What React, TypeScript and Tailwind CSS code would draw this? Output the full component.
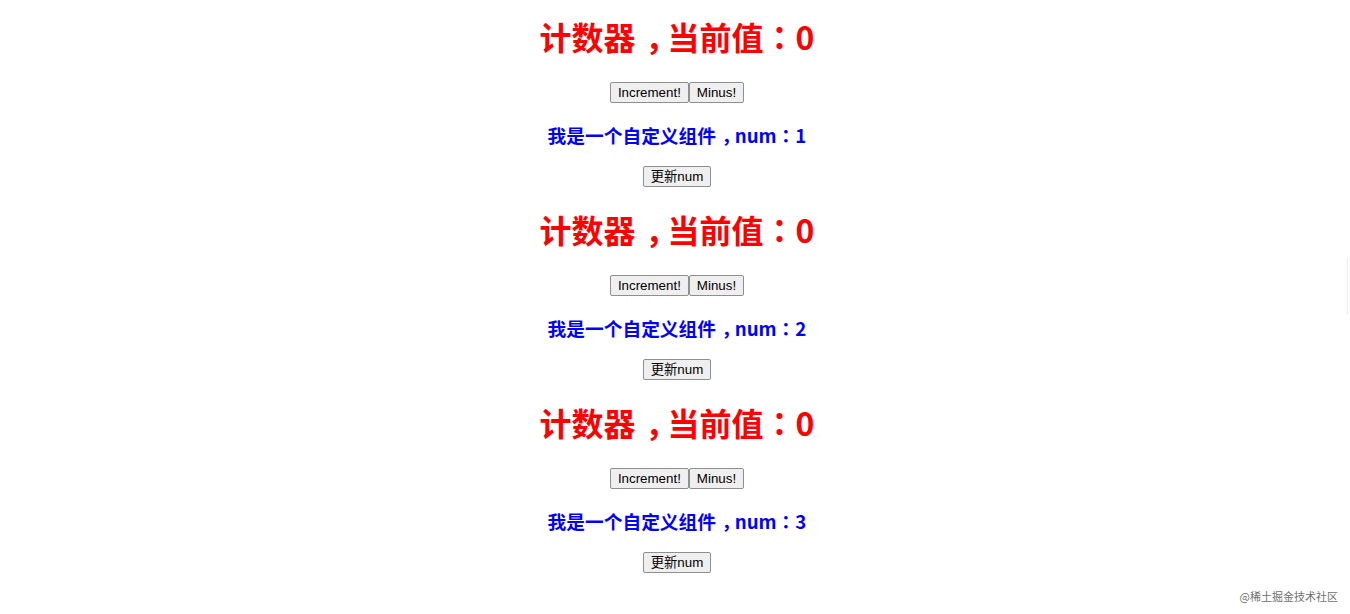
import { useState } from 'react';

function Btn({ children, onClick }: { children: React.ReactNode; onClick?: () => void }) {
  return (
    <button
      onClick={onClick}
      className="h-[21px] px-[7px] bg-[#efefef] border border-[#8f8f8f] rounded-[2px] text-[13.33px] leading-[19px] text-black font-['Liberation_Sans','Noto_Sans_CJK_SC',sans-serif] align-top"
    >
      {children}
    </button>
  );
}

// the fullwidth comma sits in the middle of its box in the reference:
// widen the glyph before it and narrow the comma by the same amount
function Comma({ before }: { before: string }) {
  return (
    <>
      <span className="tracking-[0.3em]">{before}</span>
      <span className="tracking-[-0.3em]">，</span>
    </>
  );
}

function Colon() {
  return <span className="font-['Noto_Sans_CJK_KR','Noto_Sans_CJK_SC',sans-serif]">：</span>;
}

function Counter({ initialNum }: { initialNum: number }) {
  const [count, setCount] = useState(0);
  const [num, setNum] = useState(initialNum);

  return (
    <div className="flex flex-col items-center pt-[19px] pb-[6px]">
      <h1 className="h-[42px] leading-[34px] text-[32px] font-bold text-[#ff0000] whitespace-nowrap font-['Noto_Sans_CJK_SC','Noto_Sans',sans-serif]">
        计数<Comma before="器" />当前值<Colon />{count}
      </h1>
      <div className="mt-[21px] flex h-[21px]">
        <Btn onClick={() => setCount(count + 1)}>Increment!</Btn>
        <Btn onClick={() => setCount(count - 1)}>Minus!</Btn>
      </div>
      <h3 className="mt-[21px] h-[24px] leading-[22px] text-[18.72px] font-bold text-[#0000ff] whitespace-nowrap font-['Noto_Sans_CJK_SC','Noto_Sans',sans-serif]">
        我是一个自定义组<Comma before="件" />num<Colon />{num}
      </h3>
      <div className="mt-[18px] flex h-[21px]">
        <Btn onClick={() => setNum(num + 1)}>更新num</Btn>
      </div>
    </div>
  );
}

export default function App() {
  return (
    <div className="relative h-[614px] bg-white pl-[4px] overflow-hidden">
      <Counter initialNum={1} />
      <Counter initialNum={2} />
      <Counter initialNum={3} />

      {/* faint scrollbar remnant */}
      <div className="absolute right-[2px] top-[258px] h-[56px] w-px bg-[#ececec]" />

      {/* watermark */}
      <div className="absolute right-[12px] bottom-[12px] text-[11px] leading-none text-[#6f6f6f] font-['Noto_Sans_CJK_SC',sans-serif]">
        @稀土掘金技术社区
      </div>
    </div>
  );
}
